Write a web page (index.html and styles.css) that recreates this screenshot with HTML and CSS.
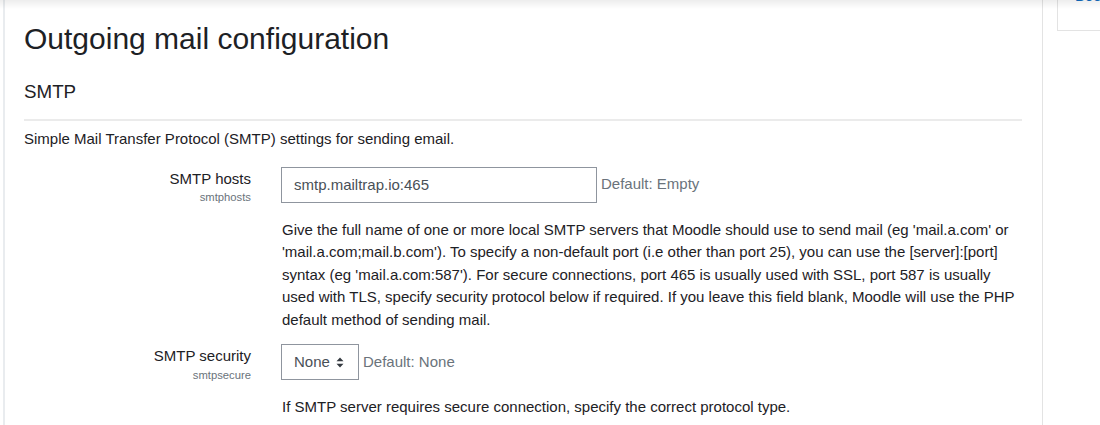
FILE: index.html
```html
<!DOCTYPE html>
<html lang="en">
<head>
<meta charset="utf-8">
<title>Outgoing mail configuration</title>
<link rel="stylesheet" href="styles.css">
</head>
<body>
<div class="topshade"></div>
<div class="page">
  <main class="main">
    <h2 class="title">Outgoing mail configuration</h2>
    <h3 class="section">SMTP</h3>
    <p class="intro">Simple Mail Transfer Protocol (SMTP) settings for sending email.</p>

    <div class="setting">
      <div class="label">
        <div class="name">SMTP hosts</div>
        <div class="key">smtphosts</div>
      </div>
      <div class="control">
        <div class="field">
          <div class="input">smtp.mailtrap.io:465</div>
          <span class="default">Default: Empty</span>
        </div>
        <div class="desc">Give the full name of one or more local SMTP servers that Moodle should use to send mail (eg 'mail.a.com' or 'mail.a.com;mail.b.com'). To specify a non-default port (i.e other than port 25), you can use the [server]:[port] syntax (eg 'mail.a.com:587'). For secure connections, port 465 is usually used with SSL, port 587 is usually used with TLS, specify security protocol below if required. If you leave this field blank, Moodle will use the PHP default method of sending mail.</div>
      </div>
    </div>

    <div class="setting">
      <div class="label">
        <div class="name">SMTP security</div>
        <div class="key">smtpsecure</div>
      </div>
      <div class="control">
        <div class="field">
          <div class="select">None
            <svg class="caret" width="8" height="11" viewBox="0 0 8 11"><path d="M4 0.5 L7.5 4.2 H0.5 Z M4 10.5 L7.5 6.8 H0.5 Z" fill="#343a40"/></svg>
          </div>
          <span class="default">Default: None</span>
        </div>
        <div class="desc">If SMTP server requires secure connection, specify the correct protocol type.</div>
      </div>
    </div>
  </main>
  <aside class="aside">
    <div class="block"><span class="blocklink">Bookmarks</span></div>
  </aside>
</div>
</body>
</html>
```
FILE: styles.css
```css
* { box-sizing: border-box; }
html, body { margin: 0; padding: 0; background: #fff; }
body {
  font-family: "Liberation Sans", Arial, sans-serif;
  font-size: 15px;
  line-height: 22.5px;
  color: #1d2125;
  overflow: hidden;
}
.topshade {
  position: fixed;
  top: 0; left: 0; right: 0;
  height: 9px;
  background: linear-gradient(to bottom, rgba(0,0,0,0.07), rgba(0,0,0,0));
  pointer-events: none;
  z-index: 5;
}
.page {
  display: flex;
  align-items: flex-start;
  height: 425px;
}
.main {
  flex: none;
  margin-left: 3px;
  width: 1040px;
  height: 425px;
  border-left: 2px solid #e9ecef;
  border-right: 1px solid #e3e3e3;
  padding: 18px 20px 0 19px;
}
.title {
  margin: 0;
  font-size: 30px;
  line-height: 42px;
  font-weight: 400;
}
.section {
  margin: 21px 0 0;
  font-size: 18.75px;
  line-height: 22px;
  font-weight: 400;
  padding-bottom: 16px;
  border-bottom: 2px solid #ebebeb;
}
.intro {
  margin: 7px 0 16px;
}
.setting {
  display: grid;
  grid-template-columns: 227px 1fr;
  column-gap: 30px;
  margin-bottom: 13px;
}
.label {
  text-align: right;
}
.name {
  line-height: 22.5px;
  padding-top: 1px;
}
.key {
  font-size: 11.25px;
  line-height: 14px;
  color: #6a737b;
}
.field {
  display: flex;
  align-items: center;
}
.input {
  width: 316px;
  height: 36px;
  border: 1px solid #8f959e;
  padding: 6px 12px;
  color: #495057;
  line-height: 22.5px;
}
.select {
  height: 36px;
  width: 78px;
  border: 1px solid #8f959e;
  padding: 6px 12px;
  color: #495057;
  display: flex;
  align-items: center;
  gap: 6px;
}
.caret { margin-top: 1px; }
.default {
  margin-left: 4px;
  color: #6a737b;
}
.desc {
  margin-top: 16px;
  padding-left: 1px;
}
.aside {
  margin-left: 14px;
  flex: 1;
  min-width: 0;
}
.block {
  margin-top: -40px;
  height: 71px;
  border: 1px solid #e3e3e3;
  border-right: none;
  padding: 24px 0 0 17px;
  white-space: nowrap;
  overflow: hidden;
}
.blocklink {
  color: #0f6cbf;
  font-size: 15px;
}
```
